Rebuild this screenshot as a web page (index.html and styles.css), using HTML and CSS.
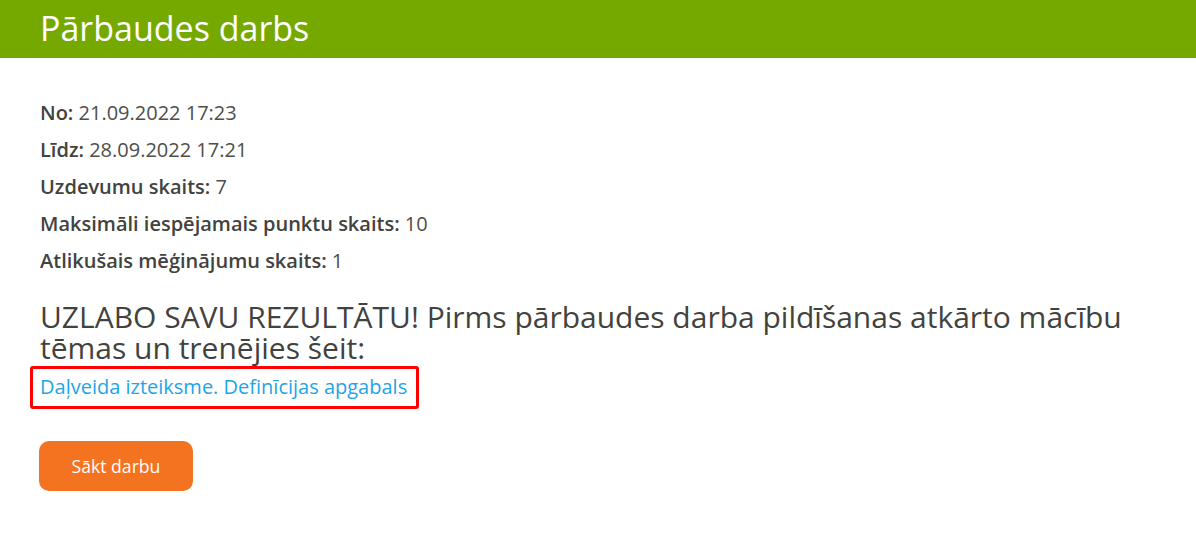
FILE: index.html
```html
<!DOCTYPE html>
<html lang="lv">
<head>
<meta charset="utf-8">
<title>Pārbaudes darbs</title>
<link rel="stylesheet" href="styles.css">
</head>
<body>
<header class="header">
  <h1 class="title">Pārbaudes darbs</h1>
</header>
<main class="content">
  <ul class="info">
    <li><b>No:</b> 21.09.2022 17:23</li>
    <li><b>Līdz:</b> 28.09.2022 17:21</li>
    <li><b>Uzdevumu skaits:</b> 7</li>
    <li><b>Maksimāli iespējamais punktu skaits:</b> 10</li>
    <li><b>Atlikušais mēģinājumu skaits:</b> 1</li>
  </ul>
  <h2 class="promo">UZLABO SAVU REZULTĀTU! Pirms pārbaudes darba pildīšanas atkārto mācību tēmas un trenējies šeit:</h2>
  <div class="links">
    <a class="topic" href="#">Daļveida izteiksme. Definīcijas apgabals</a>
  </div>
  <button class="start" type="button">Sākt darbu</button>
</main>
</body>
</html>
```
FILE: styles.css
```css
* { box-sizing: border-box; }
html, body { margin: 0; padding: 0; background: #fff; }
body { font-family: "Open Sans", "Noto Sans", sans-serif; color: #4a4a4a; }
.header { background: #76a900; height: 58px; padding: 0 40px; display: flex; align-items: center; }
.title { margin: 0; font-size: 34px; font-weight: 400; color: #fff; line-height: 1; position: relative; top: -1px; }
.content { padding: 0 40px; }
.info { list-style: none; margin: 0; padding: 36px 0 0; }
.info li { font-size: 20px; line-height: 37px; color: #4e4e4a; }
.info b { font-weight: 600; color: #42423e; }
.promo { margin: 22px 0 0; font-size: 30px; font-weight: 400; line-height: 31px; color: #42423e; width: 1110px; }
.links { margin: 3px 0 0 -10px; display: inline-block; border: 3px solid #ff0000; border-radius: 3px; padding: 3px 9px 4px 7px; }
.topic { font-size: 20px; line-height: 30px; color: #1ea5e6; text-decoration: none; }
.start { display: block; margin-top: 32px; width: 154px; height: 50px; border: none; border-radius: 10px; background: #f47321; color: #fff; font-family: inherit; font-size: 17.6px; padding: 0; margin-left: -1px; }
```
